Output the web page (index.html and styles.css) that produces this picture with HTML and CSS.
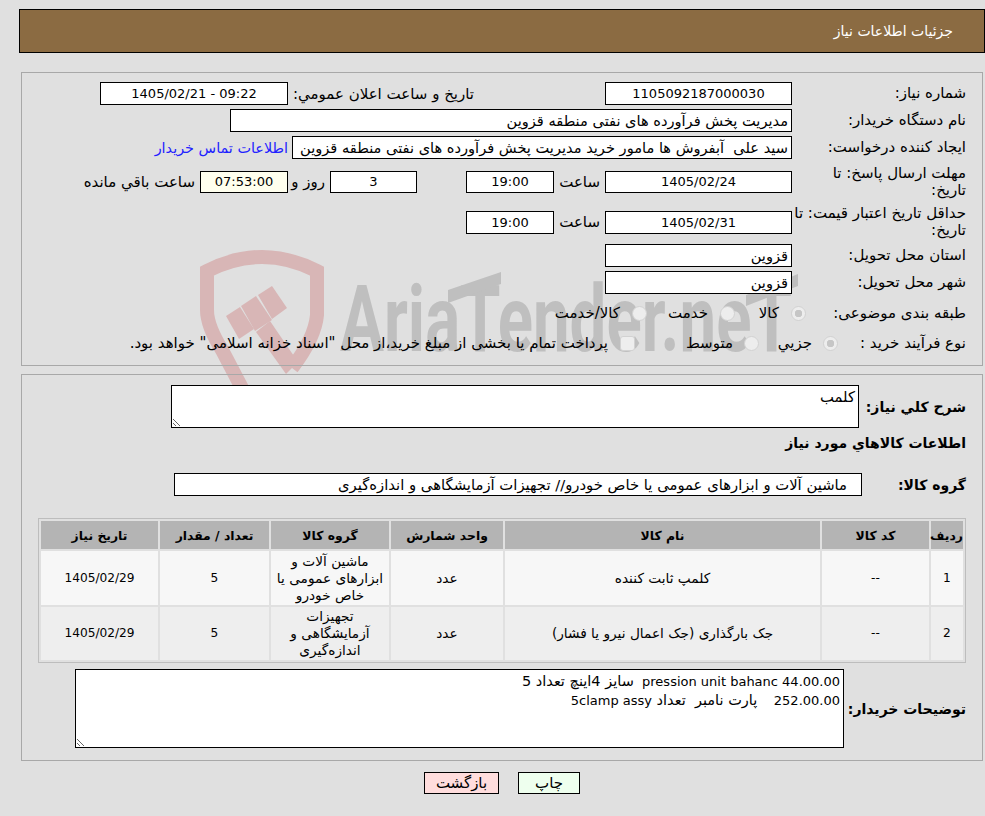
FILE: index.html
```html
<!DOCTYPE html>
<html lang="fa" dir="rtl">
<head>
<meta charset="utf-8">
<title>جزئیات اطلاعات نیاز</title>
<link rel="stylesheet" href="styles.css">
</head>
<body>
<div class="page">
  <svg class="watermark" dir="ltr" width="985" height="816" viewBox="0 0 985 816" aria-hidden="true">
    <g class="wm-red">
      <path class="wm-shield" d="M244 392 L222 350 Q207 326 207 310 L207 271 Q262 243 317 271 L317 315 Q315 338 292 368"/>
      <polygon points="226,316 240,307 254,329 239,339"/>
      <polygon points="241,306 256,296 272,320 255,331"/>
      <polygon points="258,295 272,286 287,308 272,319"/>
      <polygon points="256,332 270,321 298,362 286,374"/>
    </g>
    <g class="wm-gray">
      <text class="wm-text" x="340" y="351" textLength="452" lengthAdjust="spacingAndGlyphs">AriaTender.neT</text>
      <polygon points="448,290 501,272 501,284 448,303"/>
      <polygon points="746,295 798,274 798,286 746,306"/>
    </g>
  </svg>

  <header class="title-bar">جزئیات اطلاعات نیاز</header>

  <section class="panel panel-top">
    <div class="row">
      <div class="lbl">شماره نیاز:</div>
      <div class="box num w187">1105092187000030</div>
      <div class="txt txt-announce">تاریخ و ساعت اعلان عمومي:</div>
      <div class="box num w188">09:22 - 1405/02/21</div>
    </div>
    <div class="row gap4">
      <div class="lbl">نام دستگاه خریدار:</div>
      <div class="box w562 fill">مدیریت پخش فرآورده های نفتی منطقه قزوین</div>
    </div>
    <div class="row gap4">
      <div class="lbl">ایجاد کننده درخواست:</div>
      <div class="box w500 fill">سید علی  آبفروش ها مامور خرید مدیریت پخش فرآورده های نفتی منطقه قزوین</div>
      <a class="link" href="#">اطلاعات تماس خریدار</a>
    </div>
    <div class="row gap4 tall">
      <div class="lbl">مهلت ارسال پاسخ: تا<br>تاریخ:</div>
      <div class="box num w187 short">1405/02/24</div>
      <div class="txt hour">ساعت</div>
      <div class="box num w88 short">19:00</div>
      <div class="box num w87 short days">3</div>
      <div class="txt day-word">روز و</div>
      <div class="box num w88 short remain">07:53:00</div>
      <div class="txt remain-word">ساعت باقي مانده</div>
    </div>
    <div class="row gap4 tall-b">
      <div class="lbl">حداقل تاریخ اعتبار قیمت: تا<br>تاریخ:</div>
      <div class="box num w187">1405/02/31</div>
      <div class="txt hour">ساعت</div>
      <div class="box num w88">19:00</div>
    </div>
    <div class="row gap4">
      <div class="lbl">استان محل تحویل:</div>
      <div class="box w187 fill">قزوین</div>
    </div>
    <div class="row gap4">
      <div class="lbl">شهر محل تحویل:</div>
      <div class="box w187 fill">قزوین</div>
    </div>
    <div class="row radio-row first-radio">
      <div class="lbl lbl-cat">طبقه بندی موضوعی:</div>
      <label class="opt opt-a"><input class="radio" type="radio" name="cat" checked disabled><span>کالا</span></label>
      <label class="opt opt-b"><input class="radio" type="radio" name="cat" disabled><span>خدمت</span></label>
      <label class="opt"><input class="radio" type="radio" name="cat" disabled><span>کالا/خدمت</span></label>
    </div>
    <div class="row radio-row second-radio">
      <div class="lbl lbl-proc">نوع فرآیند خرید :</div>
      <label class="opt opt-c"><input class="radio" type="radio" name="proc" checked disabled><span>جزيي</span></label>
      <label class="opt opt-d"><input class="radio" type="radio" name="proc" disabled><span>متوسط</span></label>
      <label class="opt opt-e"><input class="check" type="checkbox" disabled><span>پرداخت تمام یا بخشی از مبلغ خرید،از محل "اسناد خزانه اسلامی" خواهد بود.</span></label>
    </div>
  </section>

  <section class="panel panel-items">
    <div class="row">
      <div class="lbl-b lbl-desc">شرح کلي نیاز:</div>
      <textarea class="area area-short" readonly>کلمب</textarea>
    </div>
    <div class="heading">اطلاعات کالاهاي مورد نیاز</div>
    <div class="row group-row">
      <div class="lbl-b lbl-group">گروه کالا:</div>
      <div class="box w688 fill group-box">ماشین آلات و ابزارهای عمومی یا خاص خودرو// تجهیزات آزمایشگاهی و اندازه‌گیری</div>
    </div>
    <table class="items">
      <colgroup>
        <col class="c-num"><col class="c-code"><col class="c-name"><col class="c-unit"><col class="c-group"><col class="c-qty"><col class="c-date">
      </colgroup>
      <thead>
        <tr><th>ردیف</th><th>کد کالا</th><th>نام کالا</th><th>واحد شمارش</th><th>گروه کالا</th><th>تعداد / مقدار</th><th>تاریخ نیاز</th></tr>
      </thead>
      <tbody>
        <tr class="odd"><td class="tnum">1</td><td class="tnum">--</td><td>کلمپ ثابت کننده</td><td>عدد</td><td>ماشین آلات و ابزارهای عمومی یا خاص خودرو</td><td class="tnum">5</td><td class="tnum">1405/02/29</td></tr>
        <tr class="even"><td class="tnum">2</td><td class="tnum">--</td><td>جک بارگذاری (جک اعمال نیرو یا فشار)</td><td>عدد</td><td>تجهیزات آزمایشگاهی و اندازه‌گیری</td><td class="tnum">5</td><td class="tnum">1405/02/29</td></tr>
      </tbody>
    </table>
    <div class="row notes-row">
      <div class="lbl-b lbl-notes">توضیحات خریدار:</div>
      <div class="area area-long"><div>pression unit bahanc 44.00.00  <span class="fa">سایز 4اینچ تعداد 5</span></div><div>252.00.00    <span class="fa">پارت نامبر  تعداد </span>5clamp assy</div></div>
    </div>
  </section>

  <div class="actions">
    <button class="btn btn-print" type="button">چاپ</button>
    <button class="btn btn-back" type="button">بازگشت</button>
  </div>
</div>
</body>
</html>
```
FILE: styles.css
```css
* { box-sizing: border-box; }
html, body { margin: 0; padding: 0; background: #e0e0e0; }
body { font-family: "DejaVu Sans", sans-serif; font-size: 15px; color: #000; overflow: hidden; }
.page { position: relative; width: 985px; height: 816px; padding: 9px 0 0 19px; }
.watermark { position: absolute; left: 0; top: 0; z-index: 0; pointer-events: none; direction: ltr; }
.wm-red { fill: #d8b6b6; }
.wm-shield { fill: none; stroke: #d8b6b6; stroke-width: 14; }
.wm-gray { fill: #bfbfbf; }
.wm-text { font-family: Roboto, sans-serif; font-weight: 700; font-size: 92px; direction: ltr; }

.title-bar { position: relative; z-index: 1; height: 44px; background: #8b6b42; border: 1px solid #000; color: #fff; font-size: 14px; line-height: 42px; padding-right: 31px; }

.panel { position: relative; z-index: 1; margin: 0 2px; border: 1px solid #a8a8a8; padding-right: 16px; }
.panel-top { margin-top: 19px; height: 294px; padding-top: 9px; }
.panel-items { margin-top: 8px; height: 387px; padding-top: 10px; }

.row { display: flex; align-items: center; }
.gap4 { margin-top: 4px; }
.tall { height: 37px; }
.tall-b { height: 36px; }
.lbl { width: 174px; flex: none; line-height: 17px; white-space: nowrap; }
.box { flex: none; height: 23px; line-height: 21px; background: #fff; border: 1px solid #000; text-align: center; white-space: pre; overflow: hidden; font-size: 14.6px; }
.num { font-size: 13px; }
.short { height: 22px; line-height: 20px; }
.fill { text-align: right; padding: 0 3px; }
.w187 { width: 187px; }
.w188 { width: 188px; }
.w88 { width: 88px; }
.w87 { width: 87px; }
.w562 { width: 562px; }
.w500 { width: 500px; }
.w688 { width: 688px; }
.txt { flex: none; white-space: nowrap; }
.txt-announce { width: 317px; padding-right: 131px; }
.hour { width: 51px; padding-right: 5px; }
.days { margin-right: 49px; }
.day-word { width: 42px; padding-right: 5px; }
.remain { background: #ffffee; }
.remain-word { padding-right: 5px; }
.link { color: #2222ff; text-decoration: none; margin-right: 4px; font-size: 14.4px; white-space: nowrap; }

.radio-row { height: 20px; }
.first-radio { margin-top: 9px; }
.second-radio { margin-top: 10px; }
.lbl-cat { width: 160px; }
.lbl-proc { width: 128px; }
.opt { display: flex; align-items: center; flex: none; white-space: nowrap; }
.opt-a { width: 71px; }
.opt-b { width: 88px; }
.opt-c { width: 79px; }
.opt-d { width: 124px; }
.radio, .check { appearance: none; margin: 0; flex: none; width: 15px; height: 15px; background: #ededed; border: 1px solid #d2d2d2; }
.radio { border-radius: 50%; }
.radio:checked { background: radial-gradient(circle, #c6c6c6 0 3.5px, #ededed 4px); }
.check { border-radius: 3px; background: #eeeeee; }
.opt-a span, .opt-b span, .opt:last-child span { margin-right: 12px; }
.opt-c span, .opt-d span { margin-right: 11px; }
.opt-e span { margin-right: 10px; }

.lbl-b { flex: none; font-weight: 700; font-size: 14px; }
.lbl-desc { width: 107px; }
.lbl-group { width: 104px; }
.lbl-notes { width: 122px; }
.heading { font-weight: 700; font-size: 14px; height: 20px; line-height: 20px; margin-top: 5px; }
.group-row { margin-top: 20px; }
.group-box { padding-right: 14px; font-size: 14.8px; }
.area { flex: none; display: block; background: #fff; border: 1px solid #000; border-radius: 0; font-family: "DejaVu Sans", sans-serif; padding: 2px 3px; margin: 0; color: #000; outline: none; }
.area-short { width: 688px; height: 43px; font-size: 14.8px; line-height: 18px; }
.area-long { width: 769px; height: 79px; font-size: 13px; line-height: 18px; white-space: pre; overflow: auto; resize: both; }
.fa { font-size: 14.5px; }

.items { width: 928px; table-layout: fixed; border-collapse: separate; border-spacing: 2px; border: 1px solid #bdbdbd; margin: 22px 0 0 0; font-size: 13.7px; }
.c-num { width: 32px; }
.c-code { width: 107px; }
.c-name { width: 315px; }
.c-unit { width: 112px; }
.c-group { width: 118px; }
.c-qty { width: 109px; }
.c-date { width: 117px; }
.items th { height: 28px; background: #b4b4b4; font-weight: 700; font-size: 12.4px; padding: 0; white-space: nowrap; }
.items td { text-align: center; padding: 0 4px; line-height: 17px; height: 54px; }
.items td.tnum { font-size: 12.2px; }
.odd td { background: #f7f7f7; }
.even td { background: #eeeeee; height: 53px; }
.notes-row { margin-top: 6px; }

.actions { position: relative; z-index: 1; display: flex; justify-content: center; gap: 19px; margin-top: 11px; }
.btn { height: 22px; padding: 0; border: 1px solid #000; border-radius: 0; font-family: "DejaVu Sans", sans-serif; font-size: 15px; line-height: 18px; color: #000; }
.btn-print { width: 62px; background: #eeffee; }
.btn-back { width: 75px; background: #ffdddd; }
```
